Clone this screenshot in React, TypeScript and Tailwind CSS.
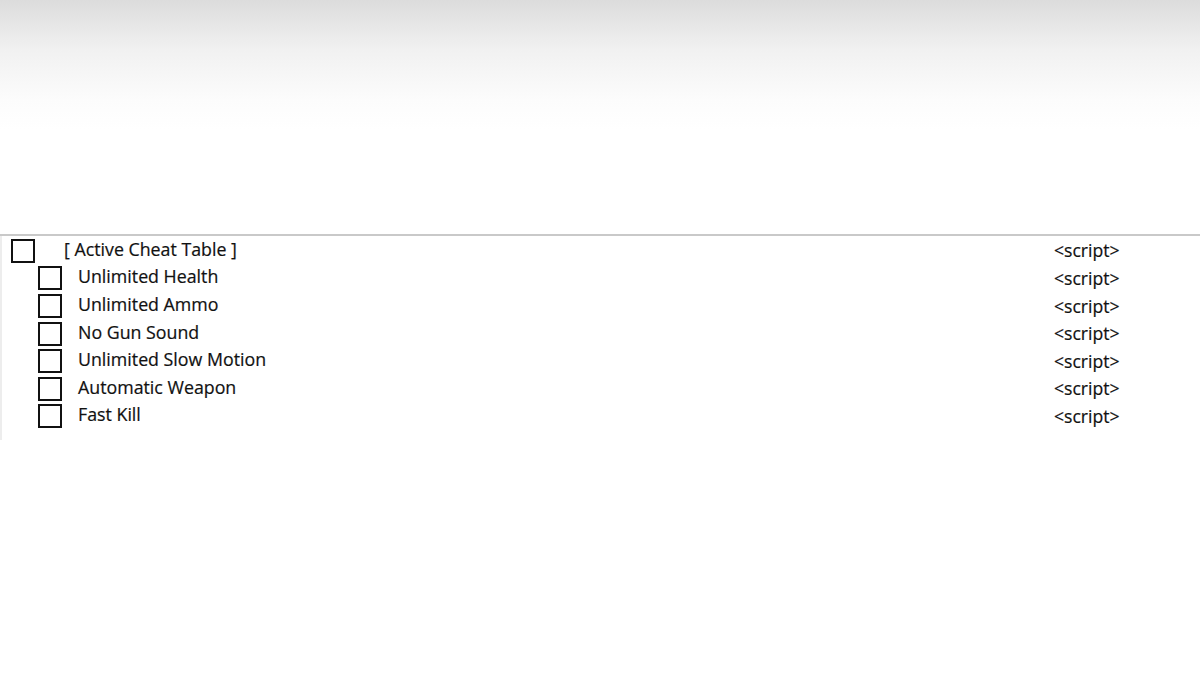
import React from 'react';

const rows = [
    { label: '[ Active Cheat Table ]', child: false },
    { label: 'Unlimited Health', child: true },
    { label: 'Unlimited Ammo', child: true },
    { label: 'No Gun Sound', child: true },
    { label: 'Unlimited Slow Motion', child: true },
    { label: 'Automatic Weapon', child: true },
    { label: 'Fast Kill', child: true },
];

const Box = () => <div className="w-6 h-6 border-2 border-[#111] bg-white shrink-0" />;

export default function App() {
    return (
        <div className="w-[1200px] h-[675px] bg-white overflow-hidden font-['Open_Sans',sans-serif] text-[#111]">
            {/* header fade */}
            <div className="h-[234px] bg-[linear-gradient(to_bottom,#dcdcdc_0px,#f1f1f1_50px,#fcfcfc_100px,#ffffff_130px)]" />

            <div className="border-t-2 border-[#c9c9c9]">
                <div className="h-[204px] border-l-2 border-[#ededed] pt-[1px]">
                    {rows.map((r) => (
                        <div key={r.label} className="flex items-center h-[27.6px]">
                            <div className={r.child ? 'pl-[36px] w-[76px]' : 'pl-[9px] w-[62px]'}>
                                <Box />
                            </div>
                            <span className="text-[17.8px] leading-none tracking-[0px] -mt-[2px] flex-1 [-webkit-text-stroke:0.2px_#111]">{r.label}</span>
                            <span className={`w-[146px] text-[17.6px] leading-none [-webkit-text-stroke:0.2px_#111] ${r.child ? 'mt-[1px]' : ''}`}>&lt;script&gt;</span>
                        </div>
                    ))}
                </div>
            </div>
        </div>
    );
}
